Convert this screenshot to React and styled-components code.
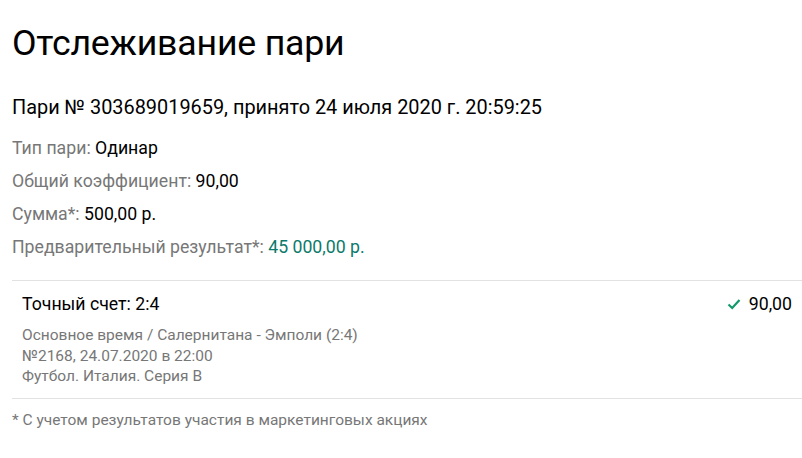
import React from 'react'
import styled, { createGlobalStyle } from 'styled-components'

const GlobalStyle = createGlobalStyle`
  body {
    margin: 0;
    background: #ffffff;
    font-family: Roboto, "Noto Sans", sans-serif;
    color: #000;
  }
`

const Page = styled.div`
  padding: 19px 0 0 12px;
`

const Title = styled.h1`
  margin: 0 0 27px;
  font-size: 35.7px;
  font-weight: 400;
  line-height: 48px;
  letter-spacing: -0.2px;
`

const BetHeader = styled.div`
  font-size: 19.9px;
  line-height: 28px;
  margin-bottom: 10px;
`

const InfoRow = styled.div`
  font-size: 17.7px;
  line-height: 33px;
`

const Label = styled.span`
  color: #777777;
`

const Value = styled.span`
  color: ${p => (p.$accent ? '#0b7a6b' : '#000')};
`

const Selection = styled.div`
  margin-top: 16px;
  border-top: 1px solid #e2e2e2;
  border-bottom: 1px solid #e2e2e2;
  padding: 12px 10px 11px 10px;
`

const SelectionTop = styled.div`
  display: flex;
  justify-content: space-between;
  align-items: center;
  font-size: 17.7px;
  line-height: 22px;
  margin-bottom: 10px;
`

const Odds = styled.div`
  display: flex;
  align-items: center;
  gap: 8px;
`

const Details = styled.div`
  font-size: 15.5px;
  line-height: 20.5px;
  color: #777777;
`

const Footnote = styled.p`
  margin: 11px 0 0;
  font-size: 15.5px;
  line-height: 20px;
  color: #777777;
`

function Check() {
  return (
    <svg width='14' height='12' viewBox='0 0 14 12'>
      <path d='M1.5 6.5 L5.2 10 L12.5 2' fill='none' stroke='#12996b' strokeWidth='2.2' />
    </svg>
  )
}

function App() {
  return <Page>
    <GlobalStyle />
    <Title>Отслеживание пари</Title>
    <BetHeader>Пари № 303689019659, принято 24 июля 2020 г. 20:59:25</BetHeader>
    <InfoRow><Label>Тип пари: </Label><Value>Одинар</Value></InfoRow>
    <InfoRow><Label>Общий коэффициент: </Label><Value>90,00</Value></InfoRow>
    <InfoRow><Label>Сумма*: </Label><Value>500,00 р.</Value></InfoRow>
    <InfoRow><Label>Предварительный результат*: </Label><Value $accent>45 000,00 р.</Value></InfoRow>
    <Selection>
      <SelectionTop>
        <span>Точный счет: 2:4</span>
        <Odds><Check />90,00</Odds>
      </SelectionTop>
      <Details>
        <div>Основное время / Салернитана - Эмполи (2:4)</div>
        <div>№2168, 24.07.2020 в 22:00</div>
        <div>Футбол. Италия. Серия B</div>
      </Details>
    </Selection>
    <Footnote>* С учетом результатов участия в маркетинговых акциях</Footnote>
  </Page>
}

export default App
